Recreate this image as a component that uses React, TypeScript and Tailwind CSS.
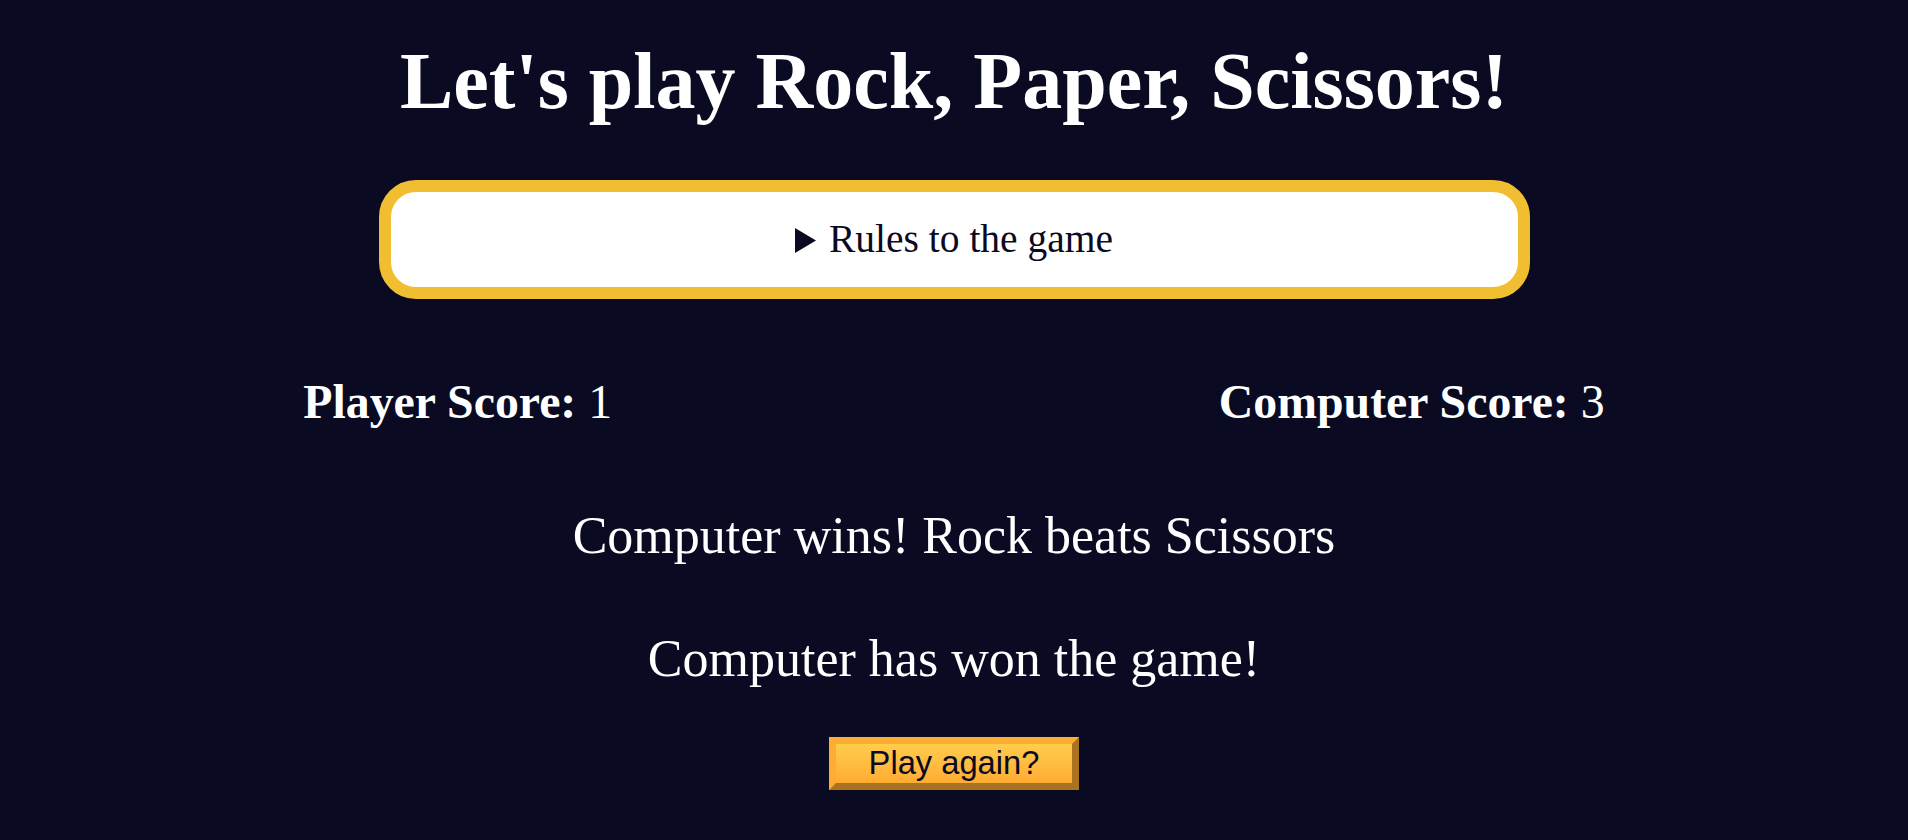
export default function App() {
  return (
    <div className="min-h-screen bg-[#0a0a23] text-white text-center font-['Liberation_Serif','Times_New_Roman',serif]">
      <h1 className="pt-[38px] text-[80px] leading-[86px] font-bold">
        Let's play Rock, Paper, Scissors!
      </h1>

      {/* Collapsed rules panel */}
      <div className="mx-auto mt-[56px] flex h-[119px] w-[1151px] items-center justify-center rounded-[37px] border-[12px] border-[#f1be32] bg-white text-[#0a0a23]">
        <div className="flex items-center text-[39.5px] leading-[45px]">
          <svg width="21" height="25" viewBox="0 0 21 25" className="mr-[13px] mt-[1px]">
            <polygon points="0,0 21,12.5 0,25" fill="#0a0a23" />
          </svg>
          <span>Rules to the game</span>
        </div>
      </div>

      {/* Scores */}
      <div className="mt-[76px] flex justify-around text-[47.8px] leading-[54px]">
        <div>
          <strong>Player Score:</strong> <span>1</span>
        </div>
        <div>
          <strong>Computer Score:</strong> <span>3</span>
        </div>
      </div>

      {/* Round results */}
      <div className="text-[52px] leading-[60px]">
        <p className="mt-[77px]">Computer wins! Rock beats Scissors</p>
        <p className="mt-[63px]">Computer has won the game!</p>
      </div>

      <button
        type="button"
        className="mx-auto mt-[48px] flex h-[53px] w-[250px] items-center justify-center border-[7px] border-t-[#feac32] border-l-[#feac32] border-b-[#aa7321] border-r-[#aa7321] bg-gradient-to-b from-[#fecc4c] to-[#ffac33] font-['Liberation_Sans',Arial,sans-serif] text-[32.7px] leading-none text-[#0a0a23]"
      >
        Play again?
      </button>
    </div>
  );
}
